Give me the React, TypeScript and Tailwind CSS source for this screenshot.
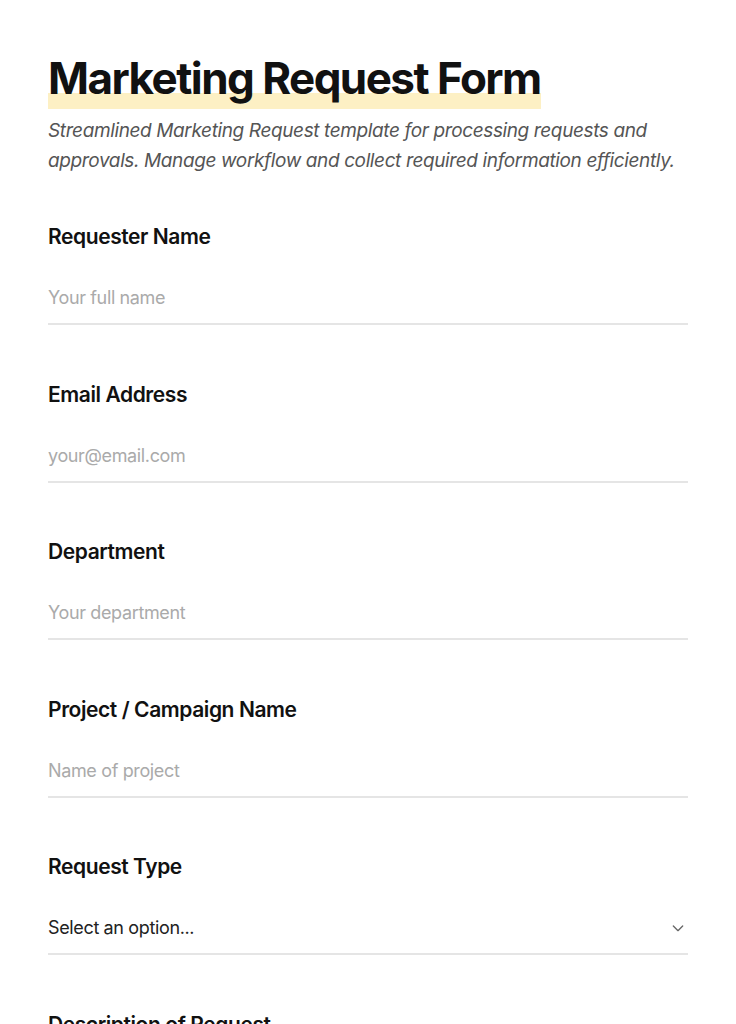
import React from "react";

const fields = [
  { label: "Requester Name", placeholder: "Your full name" },
  { label: "Email Address", placeholder: "your@email.com" },
  { label: "Department", placeholder: "Your department" },
  { label: "Project / Campaign Name", placeholder: "Name of project" },
];

export default function App() {
  return (
    <div
      className="min-h-screen bg-white px-12 pt-[50px] text-[#111]"
      style={{ fontFamily: "Inter, 'Noto Sans', sans-serif" }}
    >
      <h1 className="text-[44px] font-bold leading-[56px] tracking-[-0.035em]">
        <span className="bg-[linear-gradient(to_bottom,transparent_72%,#fdf0c4_72%)] pb-[4px]">
          Marketing Request Form
        </span>
      </h1>
      <p className="mt-[10px] text-[19px] italic leading-[30px] tracking-[-0.02em] text-[#555]">
        Streamlined Marketing Request template for processing requests and approvals. Manage workflow and collect required information efficiently.
      </p>

      <div className="mt-[47px] flex flex-col gap-[55.5px]">
        {fields.map((f) => (
          <div key={f.label} className="flex flex-col">
            <label className="text-[21px] font-semibold leading-[28px] tracking-[-0.02em]">{f.label}</label>
            <input
              className="mt-[21px] h-[53px] border-b-2 border-[#e5e5e5] bg-transparent text-[18px] tracking-[-0.02em] outline-none placeholder:text-[#aaa]"
              placeholder={f.placeholder}
            />
          </div>
        ))}
        <div className="flex flex-col">
          <label className="text-[21px] font-semibold leading-[28px] tracking-[-0.02em]">Request Type</label>
          <div className="mt-[21px] flex h-[53px] items-center justify-between border-b-2 border-[#e5e5e5]">
            <span className="text-[18px] tracking-[-0.02em] text-[#222]">Select an option...</span>
            <svg width="16" height="16" viewBox="0 0 24 24" fill="none" stroke="#666" strokeWidth="2" strokeLinecap="round" strokeLinejoin="round" className="mr-[2px]">
              <path d="M5 9l7 7 7-7" />
            </svg>
          </div>
        </div>
        <div className="flex flex-col pb-10">
          <label className="text-[21px] font-semibold leading-[28px] tracking-[-0.02em]">Description of Request</label>
        </div>
      </div>
    </div>
  );
}
